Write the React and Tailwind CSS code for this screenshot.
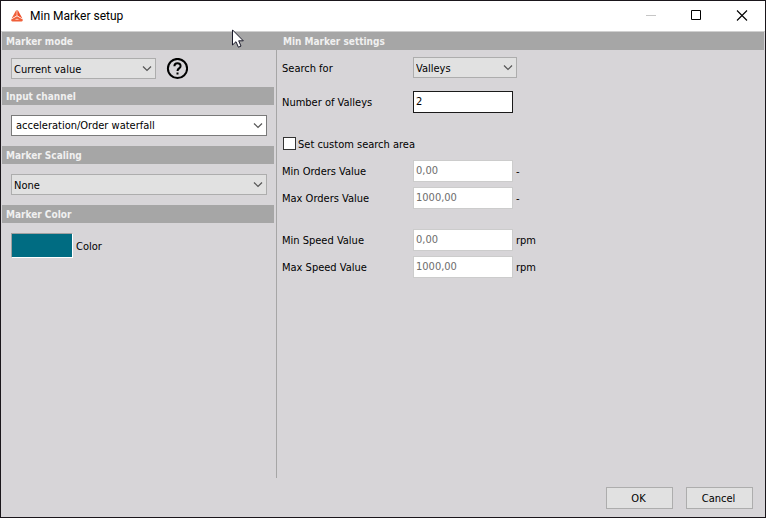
import { useId } from "react";

function LogoIcon() {
  return (
    <svg className="h-3 w-3 shrink-0" viewBox="0 0 12 12" aria-hidden="true">
      <path d="M5.7 0 L5.7 5.6 L0.6 8.6 L4.4 1.4 Q5 0.2 5.7 0Z" fill="#f0603a" />
      <path d="M6.3 0 L6.3 5.6 L11.4 8.6 L7.6 1.4 Q7 0.2 6.3 0Z" fill="#ee4f2a" />
      <path d="M6 6.2 L11.8 9.6 Q12 11.6 10.6 11.6 L1.4 11.6 Q0 11.6 0.2 9.6Z" fill="#f0603a" />
      <path d="M6 8.4 L8.4 10 L3.6 10Z" fill="#f9b7a3" />
    </svg>
  );
}

function Chevron() {
  return (
    <svg
      className="pointer-events-none absolute top-0 right-0 h-full w-[18px]"
      viewBox="0 0 18 21"
      fill="none"
      stroke="#555"
      strokeWidth="1.2"
      aria-hidden="true"
    >
      <path d="M5 8.5 L9 12.5 L13 8.5" />
    </svg>
  );
}

function Dropdown({ id, label, value, className, selectClass = "border-[#adadad] bg-[#e1e1e1] pl-[2px] pt-[2px]" }) {
  return (
    <div className={`relative h-[21px] ${className}`}>
      <select
        id={id}
        aria-label={label}
        defaultValue={value}
        className={`block h-full w-full appearance-none border pr-5 text-black outline-none ${selectClass}`}
      >
        <option>{value}</option>
      </select>
      <Chevron />
    </div>
  );
}

function Header({ children, className = "" }) {
  return (
    <h2
      className={`h-[18px] bg-[#a6a6a6] pl-1 text-[10px] leading-[20px] font-bold text-[#f0f0f0] ${className}`}
    >
      {children}
    </h2>
  );
}

function ValueRow({ label, value, unit, disabled }) {
  const id = useId();
  return (
    <div className="flex h-[22px] items-center">
      <label htmlFor={id} className="w-[131px] pt-[2px]">
        {label}
      </label>
      <input
        id={id}
        defaultValue={value}
        disabled={disabled}
        className="h-[22px] w-[100px] border border-[#1a1a1a] bg-white px-[2px] pb-[2px] text-black outline-none disabled:border-[#cccccc] disabled:text-[#6d6d6d]"
      />
      {unit && <span className="ml-[3px] pt-[2px]">{unit}</span>}
    </div>
  );
}

function TitleBar() {
  return (
    <header className="flex h-[31px] items-center border-b border-[#d0d0d0] bg-white pl-[10px]">
      <LogoIcon />
      <h1 className="ml-[7px] grow font-['Roboto','Noto_Sans',sans-serif] text-[12px] text-black">
        Min Marker setup
      </h1>
      <button type="button" aria-label="Minimize" disabled className="flex h-full w-[45px] items-center justify-center">
        <svg className="h-3 w-3" viewBox="0 0 12 12" stroke="#c6c6c6">
          <path d="M0 5.5H10" />
        </svg>
      </button>
      <button type="button" aria-label="Maximize" className="flex h-full w-[45px] items-center justify-center">
        <svg className="h-3 w-3" viewBox="0 0 12 12" fill="none" stroke="#000">
          <path d="M0.5 0.5H9.5V9.5H0.5Z" />
        </svg>
      </button>
      <button type="button" aria-label="Close" className="flex h-full w-[46px] items-center justify-center">
        <svg className="h-3 w-3" viewBox="0 0 12 12" stroke="#000" strokeWidth="1.1">
          <path d="M1 0.5L11 10.5M11 0.5L1 10.5" />
        </svg>
      </button>
    </header>
  );
}

export default function App() {
  return (
    <div className="relative flex min-h-screen flex-col border border-[#1a161b] bg-[#d7d5d8] font-['DejaVu_Sans_Condensed','Noto_Sans',sans-serif] text-[11px] leading-[14px] text-black">
      <TitleBar />
      <main className="flex grow px-px">
        <section className="w-[275px] shrink-0 border-r border-[#a6a6a6]">
          <Header>Marker mode</Header>
          <div className="flex h-[37px] items-center pl-[9px]">
            <Dropdown label="Marker mode" value="Current value" className="w-[145px]" />
            <button type="button" aria-label="Help" className="ml-[10px]">
              <svg className="h-[22px] w-[22px]" viewBox="0 0 22 22" fill="none" stroke="#000">
                <circle cx="11.5" cy="10.5" r="9.6" strokeWidth="2" />
                <path d="M8.4 8.3C8.4 4.2 14.6 4.2 14.6 8C14.6 10.4 11.5 10.4 11.5 12.9" strokeWidth="2" />
                <path d="M11.5 14.5V16.5" strokeWidth="2" />
              </svg>
            </button>
          </div>
          <Header className="mr-[2px]">Input channel</Header>
          <div className="flex h-[41px] items-center px-[9px]">
            <Dropdown
              label="Input channel"
              value="acceleration/Order waterfall"
              className="w-full"
              selectClass="border-[#7a7a7a] bg-white pl-[4px]"
            />
          </div>
          <Header className="mr-[2px]">Marker Scaling</Header>
          <div className="flex h-[41px] items-center px-[9px]">
            <Dropdown label="Marker Scaling" value="None" className="w-full" />
          </div>
          <Header className="mr-[2px]">Marker Color</Header>
          <div className="flex items-center gap-[3px] pt-[10px] pl-[9px]">
            <button
              type="button"
              id="marker-color"
              aria-label="Pick marker color"
              className="h-[25px] w-[62px] border border-t-[#a0a0a0] border-r-white border-b-white border-l-[#a0a0a0] bg-[#006c82]"
            />
            <label htmlFor="marker-color" className="pt-[2px]">
              Color
            </label>
          </div>
        </section>

        <section className="grow">
          <Header className="pl-[6px]">Min Marker settings</Header>
          <div className="flex flex-col pt-[7px] pl-[5px]">
            <div className="flex items-center">
              <label htmlFor="search-for" className="w-[131px] pt-[2px]">
                Search for
              </label>
              <Dropdown id="search-for" value="Valleys" className="w-[104px]" />
            </div>
            <div className="mt-[13px]">
              <ValueRow label="Number of Valleys" value="2" />
            </div>
            <div className="mt-6 flex h-[13px] items-center gap-[2px] pl-px">
              <input
                id="custom-area"
                type="checkbox"
                className="h-[13px] w-[13px] appearance-none border border-[#333] bg-white checked:bg-[#333]"
              />
              <label htmlFor="custom-area" className="pt-[2px]">
                Set custom search area
              </label>
            </div>
            <div className="mt-[10px] flex flex-col gap-[5px]">
              <ValueRow label="Min Orders Value" value="0,00" unit="-" disabled />
              <ValueRow label="Max Orders Value" value="1000,00" unit="-" disabled />
            </div>
            <div className="mt-5 flex flex-col gap-[5px]">
              <ValueRow label="Min Speed Value" value="0,00" unit="rpm" disabled />
              <ValueRow label="Max Speed Value" value="1000,00" unit="rpm" disabled />
            </div>
          </div>
        </section>
      </main>

      <footer className="flex justify-end gap-[13px] pt-[9px] pr-3 pb-2">
        <button type="button" className="h-[22px] w-[67px] border border-[#adadad] bg-[#e1e1e1] pt-[2px] pr-[2px]">
          OK
        </button>
        <button type="button" className="h-[22px] w-[67px] border border-[#adadad] bg-[#e1e1e1] pt-[2px] pr-[2px]">
          Cancel
        </button>
      </footer>

      <svg
        className="pointer-events-none absolute top-7 left-[231px] h-[19px] w-3"
        viewBox="0 0 12 19"
        fill="#fff"
        stroke="#1a1a2a"
        aria-hidden="true"
      >
        <path d="M0.5 0.9V16L4 12.7L6.4 18.2L9 17.1L6.7 11.8H11.3Z" />
      </svg>
    </div>
  );
}
